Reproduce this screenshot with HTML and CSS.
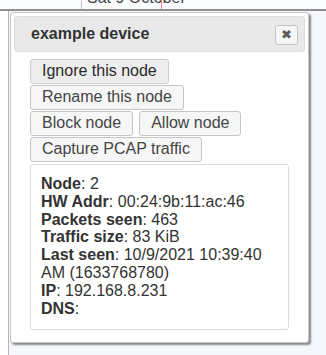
FILE: index.html
```html
<!DOCTYPE html>
<html>
<head>
<meta charset="utf-8">
<link rel="stylesheet" href="styles.css">
</head>
<body>
<div class="topbar">
  <div class="timecol"></div>
  <div class="daycol"><span class="daytext">Sat 9 October</span><span class="nowline"></span></div>
</div>
<div class="main">
  <div class="gutter"></div>
  <div class="area"></div>
</div>
<div class="dialog">
  <div class="titlebar">
    <span class="title">example device</span>
    <button class="close" title="Close">✖</button>
  </div>
  <div class="content">
    <div class="row"><button class="btn btn-hover">Ignore this node</button></div>
    <div class="row"><button class="btn">Rename this node</button></div>
    <div class="row"><button class="btn">Block node</button><button class="btn">Allow node</button></div>
    <div class="row"><button class="btn">Capture PCAP traffic</button></div>
    <div class="info">
      <div><b>Node</b>: 2</div>
      <div><b>HW Addr</b>: 00:24:9b:11:ac:46</div>
      <div><b>Packets seen</b>: 463</div>
      <div><b>Traffic size</b>: 83 KiB</div>
      <div><b>Last seen</b>: 10/9/2021 10:39:40 AM (1633768780)</div>
      <div><b>IP</b>: 192.168.8.231</div>
      <div><b>DNS</b>:</div>
    </div>
  </div>
</div>
</body>
</html>
```
FILE: styles.css
```css
html, body {
  margin: 0;
  padding: 0;
  width: 326px;
  height: 355px;
  overflow: hidden;
  background: #ffffff;
  font-family: "Liberation Sans", Arial, sans-serif;
}
.topbar {
  display: flex;
  height: 9px;
  border-bottom: 2px solid #8f8f8f;
  box-shadow: 0 1px 1px rgba(0,0,0,0.25);
  background: #fbfcff;
  overflow: hidden;
}
.timecol {
  width: 81px;
  border-right: 1px solid #c9c9c9;
  background: #fbfcff;
}
.daycol {
  position: relative;
  flex: 1;
  overflow: hidden;
}
.daytext {
  position: absolute;
  left: 5px;
  top: -10px;
  font-size: 16px;
  line-height: 16px;
  color: #444;
  white-space: nowrap;
}
.nowline {
  position: absolute;
  left: 79px;
  top: 0;
  width: 1px;
  height: 9px;
  background: #f08080;
}
.main {
  display: flex;
  height: 344px;
}
.gutter {
  width: 8px;
  border-right: 1px solid #b5b5b5;
  background: #ffffff;
}
.area {
  flex: 1;
  background: #f5f7fc;
}
.dialog {
  position: absolute;
  left: 10px;
  top: 12px;
  width: 291px;
  height: 323px;
  padding: 3px;
  background: #ffffff;
  border: 1px solid #c8c8c8;
  border-radius: 3px;
  box-shadow: 2px 2px 2px rgba(0,0,0,0.45);
}
.titlebar {
  display: flex;
  align-items: center;
  justify-content: space-between;
  height: 34px;
  padding: 0 6px 0 16px;
  background: #e9e9e9;
  border: 1px solid #dddddd;
  border-radius: 3px;
}
.title {
  font-weight: bold;
  font-size: 16px;
  color: #333333;
}
.close {
  width: 23px;
  height: 20px;
  margin-top: 1px;
  padding: 0;
  border: 1px solid #c5c5c5;
  border-radius: 3px;
  background: #f6f6f6;
  color: #5a5a5a;
  font-size: 13px;
  font-weight: bold;
  line-height: 18px;
  font-family: "DejaVu Sans", sans-serif;
  text-align: center;
}
.content {
  padding: 7px 16px 0 16px;
  display: flex;
  flex-direction: column;
  gap: 1px;
}
.row {
  display: flex;
  gap: 6px;
}
.btn {
  height: 25px;
  margin: 0;
  padding: 0 11px 1px 11px;
  border: 1px solid #c5c5c5;
  border-radius: 3px;
  background: #f6f6f6;
  color: #454545;
  font-family: "Liberation Sans", Arial, sans-serif;
  font-size: 16px;
  line-height: 22px;
}
.btn-hover {
  background: #ededed;
  border-color: #cccccc;
  color: #2b2b2b;
}
.info {
  margin-top: 1px;
  height: 146px;
  padding: 10px 10px 8px 10px;
  border: 1px solid #dddddd;
  border-radius: 3px;
  font-size: 16px;
  line-height: 17.8px;
  color: #333333;
}
.info b {
  color: #333333;
}
```
